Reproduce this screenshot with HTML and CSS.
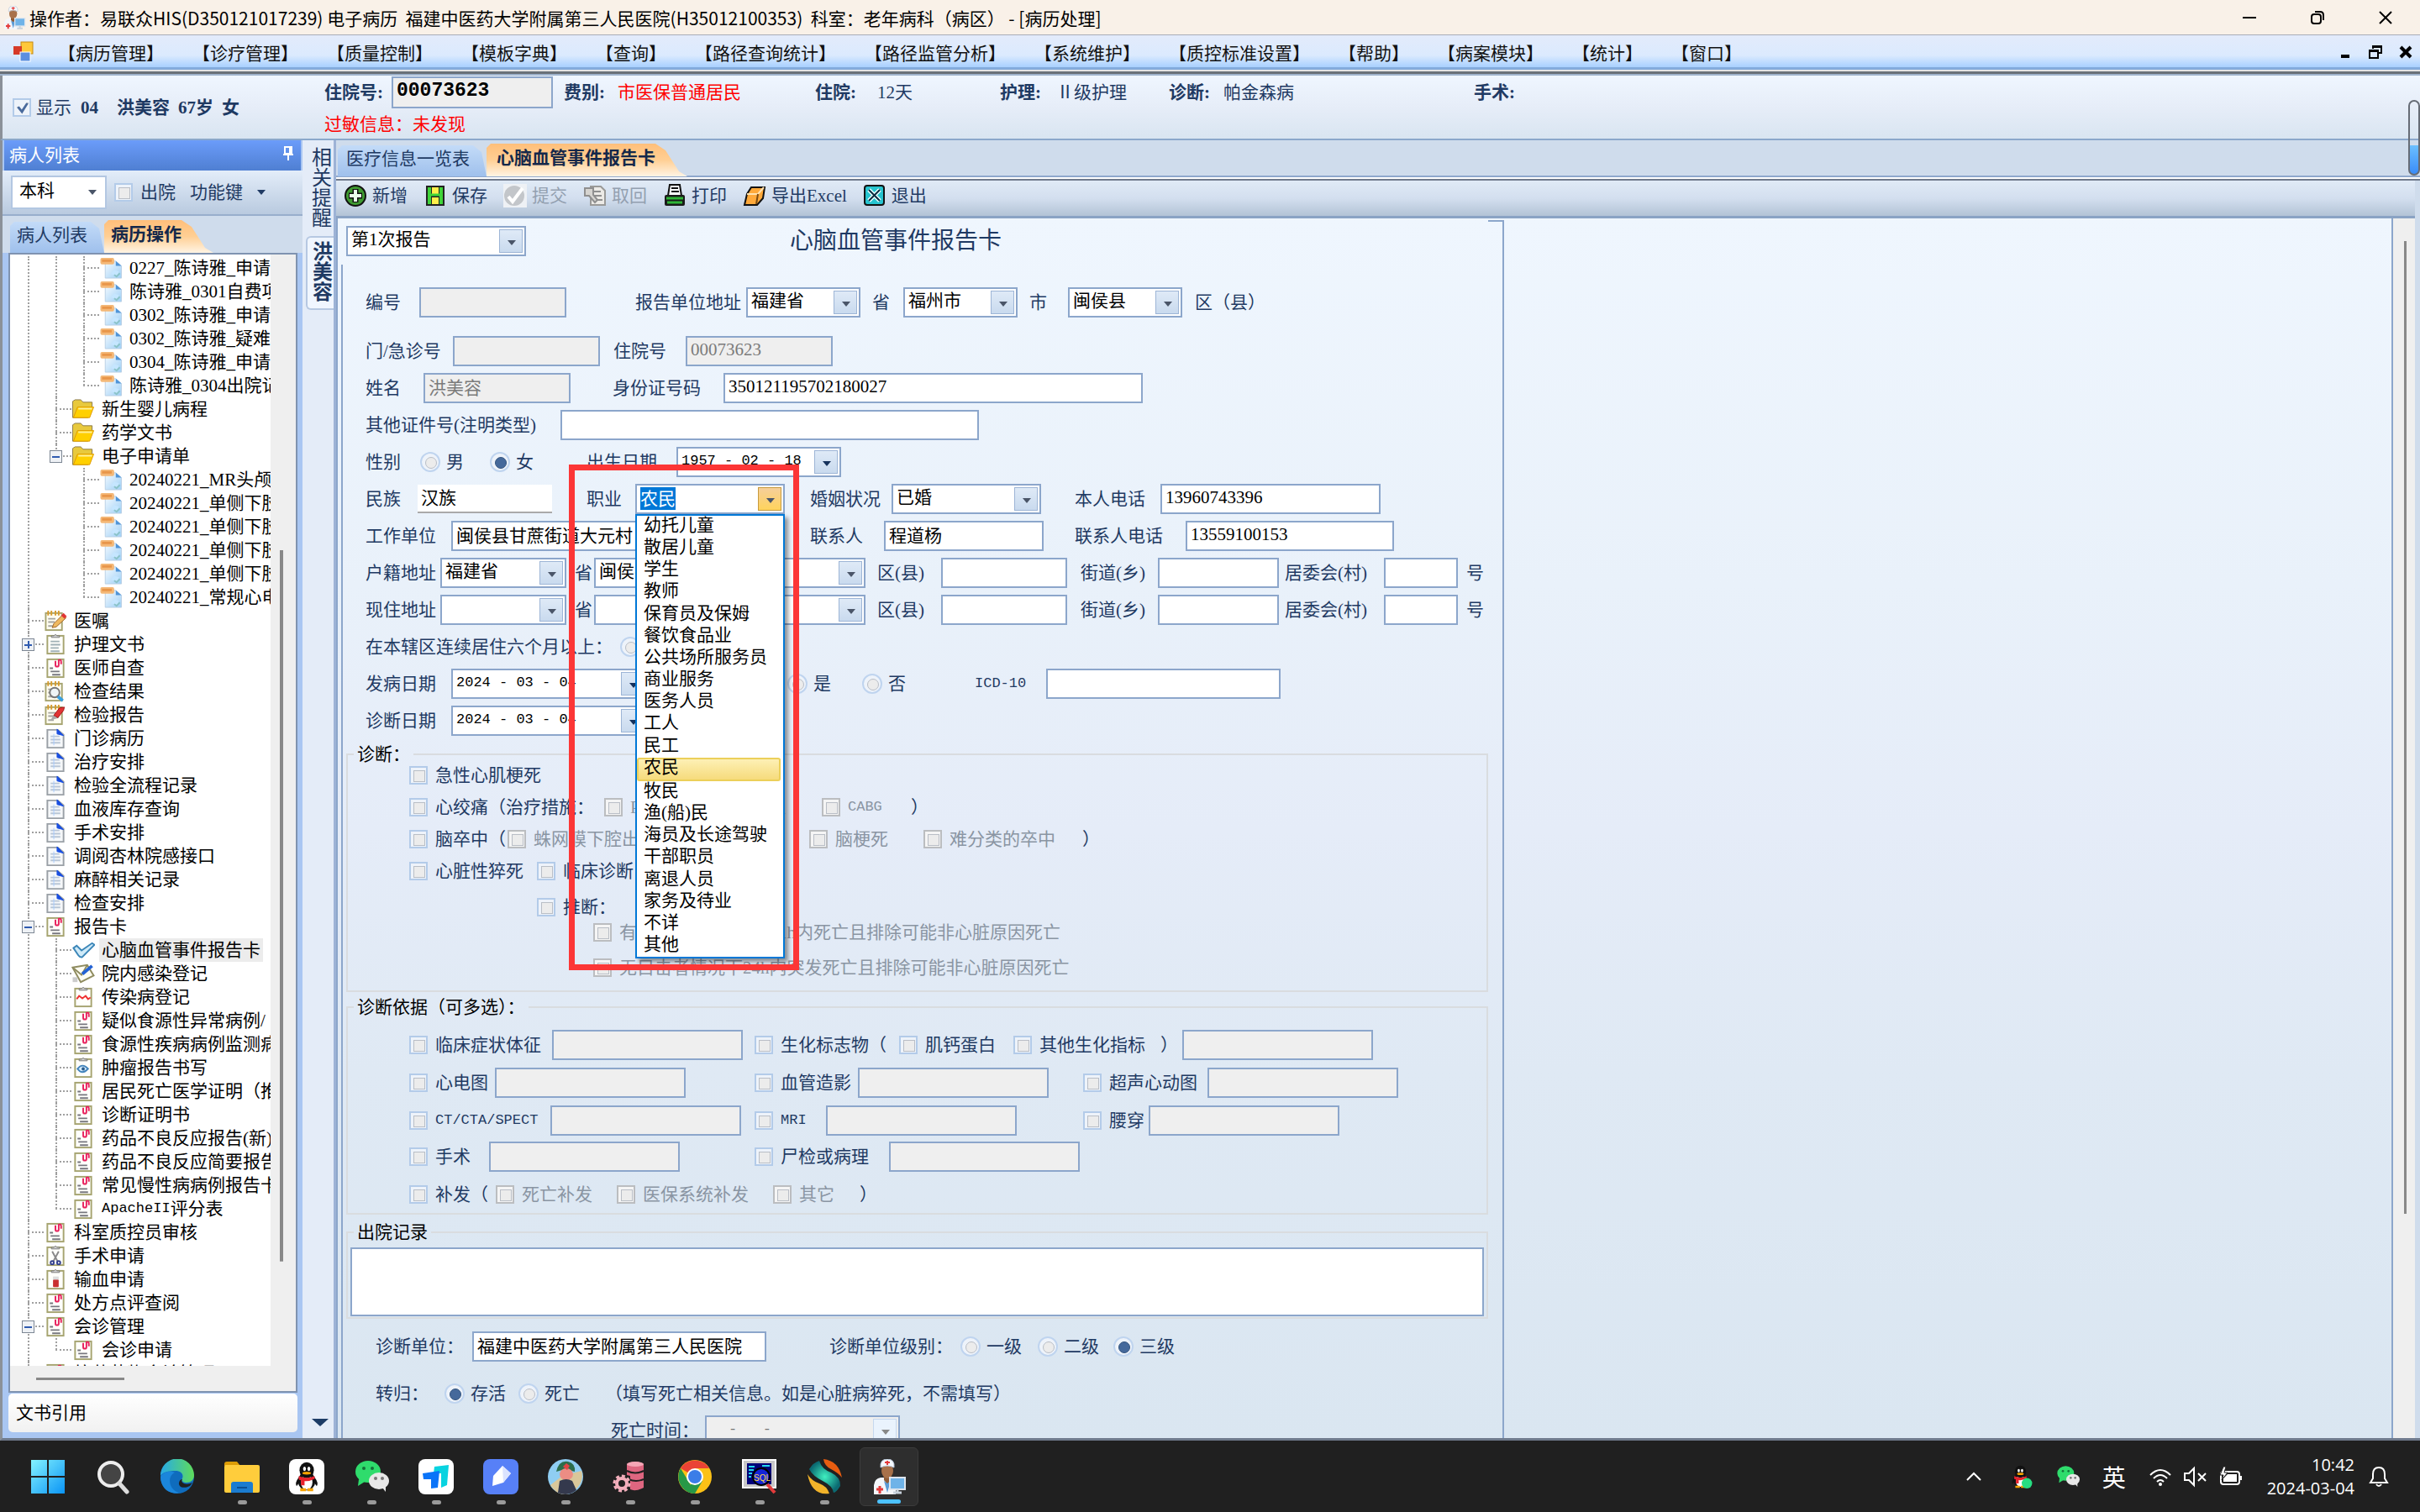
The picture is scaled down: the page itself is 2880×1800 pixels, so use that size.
FILE: index.html
```html
<!DOCTYPE html>
<html lang="zh-CN">
<head>
<meta charset="utf-8">
<title>电子病历 - 病历处理</title>
<link rel="stylesheet" href="styles.css">
</head>
<body>
<svg class="sprite" aria-hidden="true">
  <defs>
    <linearGradient id="g-win" x1="0" y1="0" x2="1" y2="1"><stop offset="0" stop-color="#84f3ff"/><stop offset="1" stop-color="#0a94f5"/></linearGradient>
    <linearGradient id="g-edge" x1="0" y1="0" x2="1" y2="0"><stop offset="0" stop-color="#27a9e8"/><stop offset="1" stop-color="#5fdc5a"/></linearGradient>
    <linearGradient id="g-page" x1="0" y1="0" x2="1" y2="1"><stop offset="0" stop-color="#f4faff"/><stop offset="1" stop-color="#9fd0f6"/></linearGradient>
    <radialGradient id="g-teal"><stop offset="0" stop-color="#3ff0c0"/><stop offset="1" stop-color="#0b6a72"/></radialGradient>
    <symbol id="i-doc" viewBox="0 0 28 28"><path d="M7 5h13l7 6v15H7z" fill="url(#g-page)" stroke="#b9cfe4"/><path d="M20 5l7 6h-7z" fill="#4f94d8"/><rect x="1" y="1" width="17" height="8" rx="2" fill="#f4b877"/><rect x="3" y="3" width="12" height="3" fill="#e8964a"/><path d="M14 21l4-5 6 2-2 5z" fill="#c5e6ff"/><path d="M18 22l3 2 4-4" fill="none" stroke="#8bc3c9" stroke-width="2"/></symbol>
    <symbol id="i-folder" viewBox="0 0 28 28"><path d="M1 4l3-2h7l3 3h11v6L20 24H1z" fill="#e8c93d" stroke="#8a7a4a"/><path d="M7 11h20l-5 13H2z" fill="#ffd000" stroke="#e09a00"/><path d="M8 13h17" stroke="#ffef9a" stroke-width="2"/></symbol>
    <symbol id="i-page" viewBox="0 0 28 28"><rect x="4" y="3" width="20" height="22" fill="#fffffb" stroke="#a6a470" stroke-width="2"/></symbol>
    <symbol id="i-clip" viewBox="0 0 28 28"><use href="#i-page"/><path d="M14 5v5q0 2 2 2t2-2V4q3-1 3 2v3" fill="none" stroke="#e8205c" stroke-width="2"/><path d="M7 14h4M8 18h11M10 22h10" stroke="#77777f" stroke-width="2"/></symbol>
    <symbol id="i-board" viewBox="0 0 28 28"><use href="#i-page"/><path d="M9 5h10V3h-3q-2-3-4 0H9z" fill="#d5d5d5" stroke="#777"/></symbol>
    <symbol id="i-list" viewBox="0 0 28 28"><use href="#i-board"/><path d="M8 10h11M8 14h12M8 18h10M8 22h11" stroke="#9fb0b5" stroke-width="2"/></symbol>
    <symbol id="i-note" viewBox="0 0 28 28"><rect x="2" y="4" width="20" height="21" fill="#fffdf0" stroke="#a6a470" stroke-width="2"/><path d="M5 1v6M9 1v6M14 1v6M18 1v6" stroke="#d79b2c" stroke-width="2"/><path d="M5 11h9M5 15h8M5 20h7" stroke="#a5a5a0" stroke-width="2"/></symbol>
    <symbol id="i-pencil" viewBox="0 0 28 28"><use href="#i-note"/><path d="M10 22l2-5L23 6l4 4-12 11z" fill="#efb95e" stroke="#9c6328"/><path d="M21 7l3-3 4 4-3 3z" fill="#e03535"/></symbol>
    <symbol id="i-find" viewBox="0 0 28 28"><use href="#i-note"/><circle cx="13" cy="15" r="6" fill="#eef4f6" stroke="#777" stroke-width="2"/><path d="M17 20l6 5" stroke="#38a0e0" stroke-width="4"/></symbol>
    <symbol id="i-pin" viewBox="0 0 28 28"><use href="#i-note"/><path d="M8 20l3-5 8 2z" fill="#aaa"/><path d="M12 14l7-9 6-1-1 4-7 9z" fill="#e23434" stroke="#a01717"/></symbol>
    <symbol id="i-blue" viewBox="0 0 28 28"><path d="M4 3h13l7 6v16H4z" fill="#f6f8fa" stroke="#9aa0a6" stroke-width="2"/><path d="M16 2l8 8-8-2z" fill="#1a4fe0" stroke="#1a4fe0"/><path d="M8 11h11M8 15h12M8 19h12" stroke="#b9c6d6" stroke-width="2"/><path d="M12 8v14" stroke="#a8ccff"/></symbol>
    <symbol id="i-check" viewBox="0 0 28 28"><path d="M2 11l4-3 6 6L25 5l3 2-15 15q-3 1-5-2z" fill="#cfeaf8" stroke="#3b86b8" stroke-width="2"/></symbol>
    <symbol id="i-pen" viewBox="0 0 28 28"><path d="M1 6l18-3 8 13-16 8z" fill="#fffdf2" stroke="#8f8c60" stroke-width="2"/><path d="M1 6l11 9 7-12" fill="none" stroke="#8f8c60" stroke-width="2"/><path d="M13 14L25 4" stroke="#2463d4" stroke-width="4"/><path d="M1 18h6v6H1z" fill="#ccc"/></symbol>
    <symbol id="i-wave" viewBox="0 0 28 28"><use href="#i-board"/><path d="M6 16l3-4 4 3 4-3 3 4 3-2" fill="none" stroke="#ef3030" stroke-width="2"/></symbol>
    <symbol id="i-eye" viewBox="0 0 28 28"><use href="#i-board"/><path d="M7 15q6-8 13 0q-7 8-13 0z" fill="#d4ecff" stroke="#4283bb" stroke-width="2"/><circle cx="14" cy="15" r="2" fill="#2b5b8a"/></symbol>
    <symbol id="i-cut" viewBox="0 0 28 28"><use href="#i-board"/><path d="M10 8l7 13M18 8l-7 13" stroke="#888" stroke-width="2"/><circle cx="10" cy="22" r="2" fill="none" stroke="#33408e" stroke-width="2"/><circle cx="18" cy="22" r="2" fill="none" stroke="#33408e" stroke-width="2"/></symbol>
    <symbol id="i-blood" viewBox="0 0 28 28"><use href="#i-board"/><rect x="11" y="10" width="7" height="5" fill="#ddd"/><rect x="11" y="14" width="7" height="9" rx="1" fill="#c92f2f"/></symbol>
    <symbol id="i-doctor" viewBox="0 0 40 42"><path d="M2 42V31q1-8 8-9h12q5 2 6 8v12z" fill="#f3f6fa"/><path d="M14 20h8v5l-4 5-4-5z" fill="#8e5c38"/><ellipse cx="18" cy="14" rx="7" ry="9" fill="#a8714a"/><path d="M10 10q-1-10 8-10t8 10q-8-4-16 0z" fill="#f5f8fc" stroke="#b8c6d8"/><path d="M18 2v5M15 4h6" stroke="#e33b3b" stroke-width="2"/><path d="M14 26l4 14 4-14-4 3z" fill="#5b9bd5"/><path d="M9 32v9M5 36h8" stroke="#e33b3b" stroke-width="3"/><rect x="21" y="22" width="18" height="14" fill="#6fb3e8" stroke="#dde5ee" stroke-width="2"/><path d="M25 40h10M30 36v4" stroke="#c8d2dc" stroke-width="3"/></symbol>
    <symbol id="i-wechat" viewBox="0 0 42 42"><ellipse cx="17" cy="15" rx="15" ry="13" fill="#2fdc6c"/><path d="M6 24l-1 8 8-5z" fill="#2fdc6c"/><circle cx="12" cy="11" r="2" fill="#14733a"/><circle cx="22" cy="11" r="2" fill="#14733a"/><ellipse cx="30" cy="26" rx="12" ry="10" fill="#e8e8e8"/><path d="M34 34l4 5v-8z" fill="#e8e8e8"/><circle cx="26" cy="23" r="2" fill="#777"/><circle cx="34" cy="23" r="2" fill="#777"/></symbol>
    <symbol id="i-qq" viewBox="0 0 34 42"><path d="M6 22q-6 8-3 12l4-5zM28 22q6 8 3 12l-4-5z" fill="#111"/><ellipse cx="17" cy="27" rx="12" ry="13" fill="#111"/><ellipse cx="17" cy="29" rx="8" ry="10" fill="#fff"/><ellipse cx="17" cy="12" rx="10" ry="11" fill="#111"/><ellipse cx="14" cy="10" rx="2" ry="3" fill="#fff"/><ellipse cx="20" cy="10" rx="2" ry="3" fill="#fff"/><ellipse cx="17" cy="16" rx="6" ry="2" fill="#f5a300"/><path d="M6 20q11 5 22 0v4q-8 4-14 3v6H9v-7l-3-1z" fill="#e8222c"/><path d="M8 39h8M18 39h8" stroke="#f5a300" stroke-width="4"/></symbol>
  </defs>
</svg>

<header class="titlebar">
  <svg class="title-icon"><use href="#i-doctor"/></svg>
  <h1>操作者：易联众HIS(D350121017239) 电子病历&nbsp; 福建中医药大学附属第三人民医院(H35012100353)&nbsp; 科室：老年病科（病区） - [病历处理]</h1>
  <div class="winctl">
    <button type="button" aria-label="最小化"><svg viewBox="0 0 18 18"><path d="M1 9h16" stroke="#000" stroke-width="2"/></svg></button>
    <button type="button" aria-label="还原"><svg viewBox="0 0 18 18"><rect x="2" y="5" width="11" height="11" rx="3" fill="none" stroke="#000" stroke-width="2"/><path d="M6 2h6q4 0 4 4v6" fill="none" stroke="#000" stroke-width="2"/></svg></button>
    <button type="button" aria-label="关闭"><svg viewBox="0 0 18 18"><path d="M2 2l14 14M16 2L2 16" stroke="#000" stroke-width="2"/></svg></button>
  </div>
</header>

<nav class="menubar">
  <svg class="mdi-icon" viewBox="0 0 26 26"><rect x="10" y="1" width="14" height="14" fill="#ffc83a" stroke="#c58a12"/><rect x="1" y="6" width="10" height="10" fill="#d63a28"/><rect x="9" y="13" width="12" height="11" fill="#5b8fe0" stroke="#fff"/></svg>
  <a href="#">【病历管理】</a><a href="#">【诊疗管理】</a><a href="#">【质量控制】</a><a href="#">【模板字典】</a><a href="#">【查询】</a><a href="#">【路径查询统计】</a><a href="#">【路径监管分析】</a><a href="#">【系统维护】</a><a href="#">【质控标准设置】</a><a href="#">【帮助】</a><a href="#">【病案模块】</a><a href="#">【统计】</a><a href="#">【窗口】</a>
  <div class="mdictl">
    <button type="button" aria-label="最小化子窗口"><svg viewBox="0 0 18 18"><path d="M4 14h10" stroke="#000" stroke-width="4"/></svg></button>
    <button type="button" aria-label="还原子窗口"><svg viewBox="0 0 18 18"><path d="M6 5V2h10v8h-3M6 3h10" fill="none" stroke="#000" stroke-width="2"/><path d="M2 7h10v9H2zM2 8h10" fill="none" stroke="#000" stroke-width="2"/></svg></button>
    <button type="button" aria-label="关闭子窗口"><svg viewBox="0 0 18 18"><path d="M3 3l12 12M15 3L3 15" stroke="#000" stroke-width="4"/></svg></button>
  </div>
</nav>

<section class="patient">
  <label class="show"><input type="checkbox" checked>显示</label>
  <p class="who"><b>04</b><b>洪美容</b><b>67岁</b><b>女</b></p>
  <div class="facts">
    <div class="fact-row">
      <label for="zyh"><b>住院号:</b></label><input id="zyh" class="big" value="00073623" readonly>
      <span><b>费别:</b></span><span class="red">市医保普通居民</span>
      <span><b>住院:</b></span><span>12天</span>
      <span><b>护理:</b></span><span>Ⅱ级护理</span>
      <span><b>诊断:</b></span><span>帕金森病</span>
      <span><b>手术:</b></span>
    </div>
    <p class="red allergy">过敏信息：未发现</p>
  </div>
  <div class="edge-handle"></div>
</section>

<main class="work">
  <aside class="side">
    <h2 class="side-head">病人列表<svg viewBox="0 0 14 20"><path d="M3 2h8v8H3zM9 2v8M1 11h12M7 11v7" fill="none" stroke="#fff" stroke-width="2"/></svg></h2>
    <div class="side-tools">
      <span class="combo flat"><select aria-label="科室"><option>本科</option></select></span>
      <label class="out"><input type="checkbox">出院</label>
      <button type="button" class="fn">功能键<i></i></button>
    </div>
    <div class="tabs side-tabs" role="tablist"><button type="button" role="tab" class="tab">病人列表</button><button type="button" role="tab" class="tab on">病历操作</button></div>
    <div class="treebox">
      <div class="treeview">
      <ul class="tree">
        <li><ul>
          <li><ul>
            <li><a href="#"><svg><use href="#i-doc"/></svg>0227_陈诗雅_申请单</a></li>
            <li><a href="#"><svg><use href="#i-doc"/></svg>陈诗雅_0301自费项目</a></li>
            <li><a href="#"><svg><use href="#i-doc"/></svg>0302_陈诗雅_申请单</a></li>
            <li><a href="#"><svg><use href="#i-doc"/></svg>0302_陈诗雅_疑难病例</a></li>
            <li><a href="#"><svg><use href="#i-doc"/></svg>0304_陈诗雅_申请单</a></li>
            <li><a href="#"><svg><use href="#i-doc"/></svg>陈诗雅_0304出院记录</a></li>
          </ul></li>
          <li><a href="#"><svg><use href="#i-folder"/></svg>新生婴儿病程</a></li>
          <li><a href="#"><svg><use href="#i-folder"/></svg>药学文书</a></li>
          <li><button type="button" class="exp" aria-label="折叠"></button><a href="#"><svg><use href="#i-folder"/></svg>电子申请单</a><ul>
            <li><a href="#"><svg><use href="#i-doc"/></svg>20240221_MR头颅平扫</a></li>
            <li><a href="#"><svg><use href="#i-doc"/></svg>20240221_单侧下肢</a></li>
            <li><a href="#"><svg><use href="#i-doc"/></svg>20240221_单侧下肢</a></li>
            <li><a href="#"><svg><use href="#i-doc"/></svg>20240221_单侧下肢</a></li>
            <li><a href="#"><svg><use href="#i-doc"/></svg>20240221_单侧下肢</a></li>
            <li><a href="#"><svg><use href="#i-doc"/></svg>20240221_常规心电图</a></li>
          </ul></li>
        </ul></li>
        <li><a href="#"><svg><use href="#i-pencil"/></svg>医嘱</a></li>
        <li><button type="button" class="exp plus" aria-label="展开"></button><a href="#"><svg><use href="#i-list"/></svg>护理文书</a></li>
        <li><a href="#"><svg><use href="#i-clip"/></svg>医师自查</a></li>
        <li><a href="#"><svg><use href="#i-find"/></svg>检查结果</a></li>
        <li><a href="#"><svg><use href="#i-pin"/></svg>检验报告</a></li>
        <li><a href="#"><svg><use href="#i-blue"/></svg>门诊病历</a></li>
        <li><a href="#"><svg><use href="#i-blue"/></svg>治疗安排</a></li>
        <li><a href="#"><svg><use href="#i-blue"/></svg>检验全流程记录</a></li>
        <li><a href="#"><svg><use href="#i-blue"/></svg>血液库存查询</a></li>
        <li><a href="#"><svg><use href="#i-blue"/></svg>手术安排</a></li>
        <li><a href="#"><svg><use href="#i-blue"/></svg>调阅杏林院感接口</a></li>
        <li><a href="#"><svg><use href="#i-blue"/></svg>麻醉相关记录</a></li>
        <li><a href="#"><svg><use href="#i-blue"/></svg>检查安排</a></li>
        <li><button type="button" class="exp" aria-label="折叠"></button><a href="#"><svg><use href="#i-clip"/></svg>报告卡</a><ul>
          <li><a href="#" class="cur"><svg><use href="#i-check"/></svg><span>心脑血管事件报告卡</span></a></li>
          <li><a href="#"><svg><use href="#i-pen"/></svg>院内感染登记</a></li>
          <li><a href="#"><svg><use href="#i-wave"/></svg>传染病登记</a></li>
          <li><a href="#"><svg><use href="#i-clip"/></svg>疑似食源性异常病例/</a></li>
          <li><a href="#"><svg><use href="#i-clip"/></svg>食源性疾病病例监测病</a></li>
          <li><a href="#"><svg><use href="#i-eye"/></svg>肿瘤报告书写</a></li>
          <li><a href="#"><svg><use href="#i-clip"/></svg>居民死亡医学证明（推</a></li>
          <li><a href="#"><svg><use href="#i-clip"/></svg>诊断证明书</a></li>
          <li><a href="#"><svg><use href="#i-clip"/></svg>药品不良反应报告(新)</a></li>
          <li><a href="#"><svg><use href="#i-clip"/></svg>药品不良反应简要报告</a></li>
          <li><a href="#"><svg><use href="#i-clip"/></svg>常见慢性病病例报告卡</a></li>
          <li><a href="#"><svg><use href="#i-clip"/></svg><span class="lat">ApacheII</span>评分表</a></li>
        </ul></li>
        <li><a href="#"><svg><use href="#i-clip"/></svg>科室质控员审核</a></li>
        <li><a href="#"><svg><use href="#i-cut"/></svg>手术申请</a></li>
        <li><a href="#"><svg><use href="#i-blood"/></svg>输血申请</a></li>
        <li><a href="#"><svg><use href="#i-clip"/></svg>处方点评查阅</a></li>
        <li><button type="button" class="exp" aria-label="折叠"></button><a href="#"><svg><use href="#i-clip"/></svg>会诊管理</a><ul>
          <li><a href="#"><svg><use href="#i-clip"/></svg>会诊申请</a></li>
        </ul></li>
        <li><a href="#"><svg><use href="#i-clip"/></svg>抗菌药物会诊管理</a></li>
        <li><a href="#"><svg><use href="#i-clip"/></svg>病历借阅</a></li>
      </ul>
      </div>
      <div class="vbar"></div>
      <div class="hbar"></div>
    </div>
    <button type="button" class="side-foot">文书引用</button>
  </aside>

  <div class="vtabs">
    <button type="button" class="vtab">相关提醒</button>
    <button type="button" class="vtab on">洪美容</button>
    <button type="button" class="vmore" aria-label="更多"></button>
  </div>

  <section class="doc">
    <div class="tabs doc-tabs" role="tablist"><button type="button" role="tab" class="tab">医疗信息一览表</button><button type="button" role="tab" class="tab on">心脑血管事件报告卡</button></div>
    <div class="toolbar">
      <button type="button"><svg viewBox="0 0 28 28"><circle cx="14" cy="14" r="12" fill="#3f9a32" stroke="#111" stroke-width="2"/><path d="M14 6v16M6 14h16" stroke="#111" stroke-width="7"/><path d="M14 7v14M7 14h14" stroke="#eaffea" stroke-width="4"/></svg>新增</button>
      <button type="button"><svg viewBox="0 0 28 28"><path d="M3 2h22v24H3z" fill="#222"/><path d="M5 4h4v20H5zM19 4h4v20h-4z" fill="#3fd43a"/><path d="M10 4h8v8h-8zM10 16h8v8h-8z" fill="#ffef4a"/><path d="M5 13h18" stroke="#3fd43a" stroke-width="3"/></svg>保存</button>
      <button type="button" disabled><svg viewBox="0 0 28 28"><rect width="28" height="28" fill="#eef1f5"/><circle cx="13" cy="14" r="12" fill="#c3c6ca"/><path d="M6 15l5 6L23 5" fill="none" stroke="#fff" stroke-width="4"/></svg>提交</button>
      <button type="button" disabled><svg viewBox="0 0 28 28"><path d="M9 3h12l5 5v17H9z" fill="#eceae6" stroke="#9a9a98" stroke-width="2"/><path d="M13 9h8M13 14h9M15 19h8" stroke="#8f8f8f" stroke-width="2"/><path d="M2 5h10v8l5 6-3 3-7-8H2z" fill="#d6d4d0" stroke="#8f8f8f" stroke-width="2"/></svg>取回</button>
      <button type="button"><svg viewBox="0 0 28 28"><path d="M8 1h12l2 13H6z" fill="#fff" stroke="#111" stroke-width="2"/><path d="M10 5h8M10 9h9" stroke="#111" stroke-width="2"/><rect x="2" y="13" width="24" height="13" rx="2" fill="#1a1a1a"/><path d="M4 17h20M5 22h18" stroke="#2fb536" stroke-width="3"/></svg>打印</button>
      <button type="button"><svg viewBox="0 0 28 28"><path d="M10 4h16l-2 13-7 8H2l3-13z" fill="#ffa93a" stroke="#111" stroke-width="2"/><path d="M5 12h13l7-8" fill="none" stroke="#ffe2b0" stroke-width="2"/><path d="M18 12l-2 12" stroke="#7a4a10" stroke-width="2"/></svg>导出Excel</button>
      <button type="button"><svg viewBox="0 0 28 28"><rect x="2" y="2" width="23" height="23" rx="3" fill="#27c4cf" stroke="#111" stroke-width="2"/><path d="M7 7l13 13M20 7L7 20" stroke="#e9ffff" stroke-width="5"/><path d="M7 7l13 13M20 7L7 20" stroke="#0b2c40" stroke-width="2"/></svg>退出</button>
    </div>
    <div class="canvas">
      <form class="sheet">
        <div class="sheet-head">
          <span class="combo"><select aria-label="报告次数"><option>第1次报告</option></select></span>
          <h2>心脑血管事件报告卡</h2>
        </div>
        <div class="sheet-body">
          <div class="fields">
            <div class="row r-unit">
              <label for="bh">编号</label><input id="bh" class="w175" readonly>
              <label for="p1">报告单位地址</label><span class="combo"><select id="p1"><option>福建省</option></select></span>
              <label for="p2">省</label><span class="combo"><select id="p2"><option>福州市</option></select></span>
              <label for="p3">市</label><span class="combo"><select id="p3"><option>闽侯县</option></select></span><span>区（县）</span>
            </div>
            <div class="row r-out">
              <label for="mz">门/急诊号</label><input id="mz" class="w175" readonly>
              <label for="zy">住院号</label><input id="zy" class="w175" value="00073623" readonly>
            </div>
            <div class="row r-name">
              <label for="xm">姓名</label><input id="xm" class="w175" value="洪美容" readonly>
              <label for="sfz">身份证号码</label><input id="sfz" value="350121195702180027">
            </div>
            <div class="row r-other"><label for="qt">其他证件号(注明类型)</label><input id="qt"></div>
            <div class="row r-sex">
              <span>性别</span><label class="opt"><input type="radio" name="sex">男</label><label class="opt"><input type="radio" name="sex" checked>女</label>
              <label for="csrq">出生日期</label><span class="combo date"><input id="csrq" value="1957 - 02 - 18"></span>
            </div>
            <div class="row r-job">
              <label for="mzu">民族</label><input id="mzu" class="plain" value="汉族">
              <label for="zhiye">职业</label>
              <span class="combo open"><input id="zhiye" class="picked" value="农民">
                <ul class="menu" role="listbox"><li role="option">幼托儿童</li><li role="option">散居儿童</li><li role="option">学生</li><li role="option">教师</li><li role="option">保育员及保姆</li><li role="option">餐饮食品业</li><li role="option">公共场所服务员</li><li role="option">商业服务</li><li role="option">医务人员</li><li role="option">工人</li><li role="option">民工</li><li role="option" aria-selected="true">农民</li><li role="option">牧民</li><li role="option">渔(船)民</li><li role="option">海员及长途驾驶</li><li role="option">干部职员</li><li role="option">离退人员</li><li role="option">家务及待业</li><li role="option">不详</li><li role="option">其他</li></ul>
                <span class="redbox"></span>
              </span>
              <label for="hy">婚姻状况</label><span class="combo w178"><select id="hy"><option>已婚</option></select></span>
              <label for="dh">本人电话</label><input id="dh" value="13960743396">
            </div>
            <div class="row r-work">
              <label for="gz">工作单位</label><input id="gz" class="w390" value="闽侯县甘蔗街道大元村">
              <label for="lxr">联系人</label><input id="lxr" class="w190" value="程道杨">
              <label for="lxdh">联系人电话</label><input id="lxdh" value="13559100153">
            </div>
            <div class="row r-addr">
              <label for="h1">户籍地址</label><span class="combo w150"><select id="h1"><option>福建省</option></select></span>
              <label for="h2">省</label><span class="combo w150"><select id="h2"><option>闽侯县</option></select></span>
              <span></span><span class="combo w150"><select id="h3" aria-label="户籍县区"><option></option></select></span>
              <label for="h4">区(县)</label><input id="h4" class="w150"><label for="h5">街道(乡)</label><input id="h5" class="w144"><label for="h6">居委会(村)</label><input id="h6" class="w88"><span>号</span>
            </div>
            <div class="row r-addr">
              <label for="x1">现住地址</label><span class="combo w150"><select id="x1"><option></option></select></span>
              <label for="x2">省</label><span class="combo w150"><select id="x2"><option></option></select></span>
              <span></span><span class="combo w150"><select id="x3" aria-label="现住县区"><option></option></select></span>
              <label for="x4">区(县)</label><input id="x4" class="w150"><label for="x5">街道(乡)</label><input id="x5" class="w144"><label for="x6">居委会(村)</label><input id="x6" class="w88"><span>号</span>
            </div>
            <div class="row r-live"><span>在本辖区连续居住六个月以上：</span><input type="radio" name="live" aria-label="居住六个月以上"></div>
            <div class="row r-ill">
              <label for="fb">发病日期</label><span class="combo date"><input id="fb" value="2024 - 03 - 04"></span>
              <label class="opt"><input type="radio" name="first">是</label><label class="opt"><input type="radio" name="first">否</label>
              <label for="icd" class="lat">ICD-10</label><input id="icd">
            </div>
            <div class="row r-ill"><label for="zd">诊断日期</label><span class="combo date"><input id="zd" value="2024 - 03 - 04"></span></div>
          </div>

          <fieldset class="dx">
            <legend>诊断：</legend>
            <div class="line"><label class="opt"><input type="checkbox">急性心肌梗死</label></div>
            <div class="line l-angina"><label class="opt"><input type="checkbox">心绞痛（治疗措施：</label><label class="opt"><input type="checkbox" disabled>PCI 冠脉内支架植入</label><label class="opt"><input type="checkbox" disabled><span class="lat">CABG</span></label><span>）</span></div>
            <div class="line l-stroke"><label class="opt"><input type="checkbox">脑卒中（</label><label class="opt"><input type="checkbox" disabled>蛛网膜下腔出血</label><label class="opt"><input type="checkbox" disabled>脑梗死</label><label class="opt"><input type="checkbox" disabled>难分类的卒中</label><span>）</span></div>
            <div class="line l-sudden"><label class="opt"><input type="checkbox">心脏性猝死</label><label class="opt"><input type="checkbox">临床诊断</label></div>
            <div class="line in1"><label class="opt"><input type="checkbox">推断：</label></div>
            <div class="line in2"><label class="opt"><input type="checkbox" disabled>有目击者情况下发病1h内死亡且排除可能非心脏原因死亡</label></div>
            <div class="line in2"><label class="opt"><input type="checkbox" disabled>无目击者情况下24h内突发死亡且排除可能非心脏原因死亡</label></div>
          </fieldset>

          <fieldset class="basis">
            <legend>诊断依据（可多选）：</legend>
            <div class="row b1"><label class="opt"><input type="checkbox">临床症状体征</label><input class="w227" aria-label="临床症状体征说明" readonly><label class="opt"><input type="checkbox">生化标志物（</label><label class="opt"><input type="checkbox">肌钙蛋白</label><label class="opt"><input type="checkbox">其他生化指标</label><span>）</span><input class="w227" aria-label="其他生化指标说明" readonly></div>
            <div class="row b2"><label class="opt"><input type="checkbox">心电图</label><input class="w227" aria-label="心电图说明" readonly><label class="opt"><input type="checkbox">血管造影</label><input class="w227" aria-label="血管造影说明" readonly><label class="opt"><input type="checkbox">超声心动图</label><input class="w227" aria-label="超声心动图说明" readonly></div>
            <div class="row b3"><label class="opt"><input type="checkbox"><span class="lat">CT/CTA/SPECT</span></label><input class="w227" aria-label="CT说明" readonly><label class="opt"><input type="checkbox"><span class="lat">MRI</span></label><input class="w227" aria-label="MRI说明" readonly><label class="opt"><input type="checkbox">腰穿</label><input class="w227" aria-label="腰穿说明" readonly></div>
            <div class="row b4"><label class="opt"><input type="checkbox">手术</label><input class="w227" aria-label="手术说明" readonly><label class="opt"><input type="checkbox">尸检或病理</label><input class="w227" aria-label="尸检或病理说明" readonly></div>
            <div class="row b5"><label class="opt"><input type="checkbox">补发（</label><label class="opt"><input type="checkbox" disabled>死亡补发</label><label class="opt"><input type="checkbox" disabled>医保系统补发</label><label class="opt"><input type="checkbox" disabled>其它</label><span>）</span></div>
          </fieldset>

          <fieldset class="record">
            <legend>出院记录</legend>
            <textarea aria-label="出院记录"></textarea>
          </fieldset>

          <div class="tail">
            <div class="row t1"><label for="dw">诊断单位：</label><input id="dw" class="w350" value="福建中医药大学附属第三人民医院"><span>诊断单位级别：</span><label class="opt"><input type="radio" name="lv">一级</label><label class="opt"><input type="radio" name="lv">二级</label><label class="opt"><input type="radio" name="lv" checked>三级</label></div>
            <div class="row t2"><span>转归：</span><label class="opt"><input type="radio" name="end" checked>存活</label><label class="opt"><input type="radio" name="end">死亡</label><span>（填写死亡相关信息。如是心脏病猝死，不需填写）</span></div>
            <div class="row t3"><label for="sw">死亡时间：</label><span class="combo date off"><input id="sw" value="-   -" disabled></span></div>
          </div>
        </div>
      </form>
      <div class="scroll"></div>
    </div>
  </section>
</main>

<footer class="taskbar">
  <div class="apps">
    <button type="button" aria-label="开始"><svg viewBox="0 0 42 42"><path d="M1 1h19v19H1zM22 1h19v19H22zM1 22h19v19H1zM22 22h19v19H22z" fill="url(#g-win)"/></svg></button>
    <button type="button" aria-label="搜索"><svg viewBox="0 0 42 42"><circle cx="19" cy="18" r="14" fill="#444" stroke="#eee" stroke-width="4"/><path d="M29 29l9 10" stroke="#ddd" stroke-width="5" stroke-linecap="round"/></svg></button>
    <button type="button" aria-label="Edge"><svg viewBox="0 0 42 42"><circle cx="21" cy="21" r="20" fill="#0f6cbd"/><path d="M1 20A20 20 0 0 1 41 19c0 6-4 9-9 9-4 0-7-2-5-5 2-5-2-9-8-9-9 0-16 2-18 6z" fill="url(#g-edge)"/><path d="M18 16c-9 4-8 20 5 24-14 3-22-8-22-19 3-5 10-8 17-5z" fill="#1b86dc"/><path d="M27 24c-3 4 4 8 12 4l-3 4c-8 4-14 1-13-4 1-3 2-4 4-4z" fill="#202020"/></svg></button>
    <button type="button" class="run" aria-label="文件资源管理器"><svg viewBox="0 0 42 42"><path d="M0 6q0-3 3-3h12l4 5h-19z" fill="#dc9c06"/><rect y="7" width="42" height="33" rx="2" fill="#ffcd3c"/><path d="M8 40V30q0-3 3-3h20q3 0 3 3v10z" fill="#1b7cd0"/><path d="M15 34h12" stroke="#0b4f94" stroke-width="2"/></svg></button>
    <button type="button" class="run" aria-label="QQ"><svg viewBox="0 0 42 42"><rect width="42" height="42" rx="8" fill="#fff"/><use href="#i-qq" x="6" y="3" width="30" height="36"/></svg></button>
    <button type="button" class="run" aria-label="微信"><svg viewBox="0 0 42 42"><use href="#i-wechat"/></svg></button>
    <button type="button" class="run" aria-label="协作"><svg viewBox="0 0 42 42"><rect width="42" height="42" rx="8" fill="#fff"/><path d="M19 9l17-2-2 24-7 3V17h-9z" fill="#08d3e0"/><path d="M5 17l20-3-2 20-8 1V24H6z" fill="#0a74f8"/></svg></button>
    <button type="button" class="run" aria-label="笔记"><svg viewBox="0 0 42 42"><rect width="42" height="42" rx="8" fill="#5780f7"/><path d="M23 8l10 9-9 11-13 4 1-12z" fill="#fff"/><path d="M23 8l10 9-9 11z" fill="#dbe3ff"/></svg></button>
    <button type="button" class="run" aria-label="头像应用"><svg viewBox="0 0 42 42"><circle cx="21" cy="21" r="21" fill="#8fcdf2"/><path d="M3 31l14-11 23-6q3 10-4 19-8 9-17 9-10-1-16-11z" fill="#d9c79a"/><path d="M10 15q3-14 14-12 9 2 8 12-12-4-22 0z" fill="#2c6e4c"/><ellipse cx="22" cy="18" rx="8" ry="7" fill="#ec8d84"/><path d="M12 40l2-14q8-4 15 0l5 11q-10 8-22 3z" fill="#34394d"/><path d="M18 9l4-4 4 3-3 5z" fill="#e04444"/></svg></button>
    <button type="button" class="run" aria-label="数据库"><svg viewBox="0 0 42 42"><path d="M17 6q10-6 20 0v28q-10 5-16 2V20l-4-1z" fill="#de6680"/><ellipse cx="27" cy="6" rx="10" ry="3" fill="#f5a6b6"/><path d="M17 14q10 5 20 0M19 24q9 4 18 0" fill="none" stroke="#202020" stroke-width="2"/><circle cx="11" cy="29" r="6" fill="none" stroke="#f2aebb" stroke-width="4"/><circle cx="11" cy="29" r="9" fill="none" stroke="#f2aebb" stroke-width="3" stroke-dasharray="4 3"/></svg></button>
    <button type="button" class="run" aria-label="Chrome"><svg viewBox="0 0 42 42"><circle cx="21" cy="21" r="20" fill="#fbc116"/><path d="M21 21L4 11a20 20 0 0 1 34 0H21z" fill="#ea4335"/><path d="M4 11l12 20 5 10A20 20 0 0 1 4 11z" fill="#279847"/><path d="M16 30l14-4-9 15-5-1z" fill="#279847"/><circle cx="21" cy="21" r="10" fill="#fff"/><circle cx="21" cy="21" r="8" fill="#3b7de8"/></svg></button>
    <button type="button" class="run" aria-label="SQL"><svg viewBox="0 0 42 42"><rect x="1" y="1" width="39" height="33" fill="#c8c8c8" stroke="#fff" stroke-width="2"/><rect x="6" y="5" width="29" height="25" fill="#000078"/><path d="M8 9h7M8 13h6M8 17h4M8 21h3M24 8h9" stroke="#21d7ee" stroke-width="2"/><path d="M30 30l9 10" stroke="#e23b3b" stroke-width="4"/><circle cx="23" cy="21" r="10" fill="#1424d8" stroke="#000" stroke-width="2"/><text x="14" y="26" font-family="Liberation Sans" font-size="10" fill="#ffd84a">SQL</text></svg></button>
    <button type="button" class="run" aria-label="球形应用"><svg viewBox="0 0 42 42"><path d="M20 0Q38 2 42 22q-5-6-13-10T20 0z" fill="#e85d10"/><path d="M15 2q3 10 14 14 12 6 11 16-5 8-8 8-1-8-13-14T3 12q5-8 12-10z" fill="url(#g-teal)"/><path d="M1 18q5 8 14 11t12 12Q6 44 1 18z" fill="#f2b32a"/></svg></button>
    <button type="button" class="run active" aria-label="电子病历"><svg viewBox="0 0 40 42"><use href="#i-doctor"/></svg></button>
  </div>
  <div class="tray">
    <svg class="t-up" viewBox="0 0 20 20"><path d="M2 14l8-8 8 8" fill="none" stroke="#fff" stroke-width="2"/></svg>
    <svg class="t-ic" viewBox="0 0 34 36"><use href="#i-qq" width="30" height="36"/><circle cx="25" cy="28" r="8" fill="#26de81"/></svg>
    <svg class="t-ic" viewBox="0 0 42 42"><use href="#i-wechat"/></svg>
    <span class="ime">英</span>
    <svg class="t-ic" viewBox="0 0 28 28"><path d="M2 12Q14 0 26 12M6 16q8-8 16 0M10 20q4-4 8 0" fill="none" stroke="#fff" stroke-width="2"/><circle cx="14" cy="23" r="2" fill="#fff"/></svg>
    <svg class="t-ic vol" viewBox="0 0 28 28"><path d="M1 10h5l6-6v20l-6-6H1z" fill="none" stroke="#fff" stroke-width="2"/><path d="M17 10l9 9M26 10l-9 9" stroke="#fff" stroke-width="2"/></svg>
    <svg class="t-ic bat" viewBox="0 0 28 28"><rect x="2" y="8" width="22" height="15" rx="3" fill="none" stroke="#fff" stroke-width="2"/><path d="M10 11h11v9H5v-4z" fill="#fff"/><path d="M25 13h2v5h-2z" fill="#fff"/><path d="M5 2L1 12h4l-2 6 7-9H6l2-7z" fill="#fff" stroke="#202020"/></svg>
    <p class="clock"><span>10:42</span><span>2024-03-04</span></p>
    <svg class="t-ic" viewBox="0 0 28 28"><path d="M4 21l3-5v-5q0-8 7-8t7 8v5l3 5zM11 23q3 4 6 0" fill="none" stroke="#fff" stroke-width="2"/></svg>
  </div>
</footer>
</body>
</html>
```
FILE: styles.css
```css
:root {
  --ink: #1f3a63;
  --line: #8ca6cb;
  --song: "Liberation Serif", "Noto Sans CJK SC", sans-serif;
  --hei: "Noto Sans CJK SC", sans-serif;
  --mono: "Liberation Mono", "Noto Sans CJK SC", monospace;
}
* { box-sizing: border-box; }
body {
  margin: 0;
  height: 100vh;
  display: flex;
  flex-direction: column;
  overflow: hidden;
  font: 21px/28px var(--song);
  color: var(--ink);
  background: #cfdcec;
}
button, input, select, textarea { font: inherit; color: inherit; margin: 0; border-radius: 0; }
button { background: none; border: 0; padding: 0; white-space: nowrap; }
a { color: inherit; text-decoration: none; }
p, h1, h2, ul { margin: 0; padding: 0; font-size: inherit; font-weight: inherit; list-style: none; }
.sprite { position: absolute; width: 0; height: 0; }
.lat { font-family: var(--mono); font-size: 17px; }

/* title bar and menu */
.titlebar {
  height: 42px; flex: none; display: flex; align-items: center;
  background: #f9f1e8; border-bottom: 1px solid #a9adb8;
  font-family: var(--hei); color: #000;
}
.title-icon { width: 28px; height: 28px; margin: 0 4px 0 3px; }
.titlebar h1 { flex: 1; white-space: nowrap; }
.winctl { display: flex; gap: 63px; padding-right: 32px; }
.winctl svg, .mdictl svg { display: block; width: 18px; height: 18px; }
.menubar {
  height: 48px; flex: none; display: flex; align-items: center; gap: 34px;
  padding-bottom: 9px; font-family: var(--hei); color: #111;
  background: linear-gradient(#e3ebfb, #dbeafe 50%, #a8d0ff 38px, #83abdc 38px, #83abdc 41px, #e4e4e4 41px, #e4e4e4 43px, #697078 43px, #697078 46px, #9fb3cc 46px);
}
.menubar a { white-space: nowrap; }
.mdi-icon { width: 26px; height: 26px; margin: 0 -6px 0 15px; }
.mdictl { margin-left: auto; display: flex; gap: 18px; padding-right: 8px; }

/* patient strip */
.patient {
  height: 77px; flex: none; display: flex; position: relative; padding-left: 12px;
  background: linear-gradient(#eff6ff, #e6edf8 50%, #d9e5f1); border-bottom: 2px solid #8ba8cb; border-left: 3px solid #8b9199;
}
.show { display: flex; align-items: center; gap: 6px; }
.who { display: flex; align-items: center; margin-left: 11px; width: 290px; }
.who b { margin-right: 10px; white-space: nowrap; }
.who b:first-child { margin-right: 22px; }
.fact-row { display: grid; grid-template-columns: 80px 205px 64px 235px 74px 146px 67px 134px 65px 298px auto; align-items: center; height: 40px; white-space: nowrap; }
.big { width: 192px; height: 38px; background: #efefef; font: bold 23px/28px "Liberation Mono", monospace; color: #000; }
.red { color: #f00; }
.allergy { margin-top: 4px; }
.edge-handle { position: absolute; right: 0; top: 29px; width: 14px; height: 90px; border: 2px solid #666c76; border-radius: 7px; background: linear-gradient(transparent 60%, #6cc0ff 60%, #3a8cf8); z-index: 3; }

/* form controls */
input, select, textarea { border: 2px solid var(--line); background: #fff; color: #000; height: 36px; padding: 0 4px 4px; min-width: 0; outline: 0; }
input[readonly] { background: #efefef; color: #7b7b7b; }
input.big[readonly] { color: #000; }
input[type=checkbox], input[type=radio] {
  appearance: none; flex: none; width: 22px; height: 22px; padding: 3px;
  border: 2px solid #b3cbe9; background: #eef3fa;
}
input[type=checkbox]::before, input[type=radio]::before {
  content: ""; display: block; width: 12px; height: 12px; background: #ececec; border: 1px solid #b9bec6;
}
input[type=radio], input[type=radio]::before { border-radius: 50%; }
input[type=radio] { width: 24px; height: 24px; padding: 4px; border-color: #bfd4ef; }
input[type=radio]:checked::before { background: #45699b; border-color: #34557f; }
input[type=checkbox]:checked::before { background: #4a6a9c; clip-path: polygon(0 45%, 20% 35%, 42% 65%, 85% 0, 100% 10%, 45% 100%); }
input:disabled { border-color: #bbbdc0; background: #f5f5f5; }
.opt { display: flex; align-items: center; gap: 9px; white-space: nowrap; line-height: 24px; }
.opt:has(input[type=radio]) { gap: 7px; }
.opt:has(:disabled) { color: #8a95a3; }

.combo { position: relative; display: block; width: 136px; height: 36px; }
.combo select, .combo > input { appearance: none; width: 100%; display: block; }
.combo::before {
  content: ""; position: absolute; right: 4px; top: 4px; bottom: 4px; width: 26px;
  border: 1px solid #9db5d6; background: linear-gradient(#dfeaf7, #c9daee); pointer-events: none;
}
.combo::after {
  content: ""; position: absolute; right: 12px; top: 17px; border: 5px solid transparent;
  border-top: 6px solid #4a5568; border-bottom: 0; pointer-events: none;
}
.combo.date::after { border-top-color: #16325c; }
.combo.date > input { font-family: var(--mono); font-size: 17px; }
.combo.flat { width: 114px; height: 40px; }
.combo.flat select { height: 40px; border-color: #b3c7e2; padding-left: 8px; }
.combo.flat::before { display: none; }
.w88 { width: 88px; } .w144 { width: 144px; } .w150, .combo.w150 { width: 150px; } .w175 { width: 175px; }
.combo.w178 { width: 178px; } .w190 { width: 190px; } .w227 { width: 227px; } .w350 { width: 350px; } .w390 { width: 390px; }

/* work area */
.work { flex: 1; min-height: 0; display: flex; border-left: 3px solid #8b9199; border-bottom: 3px solid #6f7a8c; }
.side { width: 357px; flex: none; display: flex; flex-direction: column; padding: 0 6px 7px 7px; background: #a9c6f2; }
.side-head { height: 36px; margin: 0 -4px 0 -5px; padding: 0 8px 4px 6px; display: flex; align-items: center; justify-content: space-between; color: #fff; font-family: var(--hei); background: linear-gradient(#6b9cfa, #4f7fd2); }
.side-head svg { width: 14px; height: 20px; }
.side-tools { height: 54px; display: flex; align-items: center; margin: 0 -6px 0 -7px; padding-left: 10px; background: linear-gradient(#e3edf9, #b9cadf); border-bottom: 2px solid #98aecc; }
.out { display: flex; align-items: center; gap: 9px; margin-left: 9px; }
.fn { margin-left: 17px; display: flex; align-items: center; gap: 17px; }
.fn i { border: 5px solid transparent; border-top: 6px solid var(--ink); border-bottom: 0; }
.tabs { display: flex; align-items: flex-end; background: #cfdcec; }
.tab { height: 37px; padding: 0 20px 5px 10px; background: linear-gradient(#c3dbf8, #9fc0ec); text-align: left; clip-path: polygon(0 5px, 5px 0, calc(100% - 16px) 0, calc(100% - 6px) 8px, 100% 100%, 0 100%); }
.tab.on { height: 39px; padding: 0 38px 6px 12px; font-weight: bold; color: #14284a; background: linear-gradient(#ffbf7a, #ffcf94 50%, #fff4e4); clip-path: polygon(0 5px, 5px 0, calc(100% - 38px) 0, calc(100% - 26px) 8px, calc(100% - 10px) calc(100% - 6px), 100% 100%, 0 100%); }
.side-tabs { height: 44px; margin: 0 -6px 0 -7px; padding-left: 9px; }
.side-tabs .tab { padding-left: 8px; }
.treebox { flex: 1; min-height: 0; display: grid; grid-template: 1fr 30px / 1fr 30px; border: 2px solid #7f93b0; background: #efefef; font-family: var(--song); color: #000; }
.treeview { background: #fff; overflow: hidden; padding: 2px 0 0 21px; }
.tree li { position: relative; white-space: nowrap; }
.tree li::before { content: ""; position: absolute; left: 0; top: 0; bottom: 0; border-left: 2px dotted #a0a0a0; }
.tree ul > li:last-child::before { bottom: auto; height: 14px; }
.tree ul { padding-left: 33px; }
.tree a { display: flex; align-items: center; height: 28px; }
.tree a::before { content: ""; flex: none; width: 19px; border-top: 2px dotted #a0a0a0; }
.tree svg { width: 28px; height: 27px; flex: none; margin-right: 8px; }
.cur span { background: #ececec; margin: 0 -3px; padding: 0 3px; }
.exp { position: absolute; left: -7px; top: 7px; width: 15px; height: 15px; border: 1px solid #7d8794; background: linear-gradient(#2f5bb0, #2f5bb0) center/9px 2px no-repeat, #eef1f5; z-index: 1; }
.exp.plus { background: linear-gradient(#2f5bb0, #2f5bb0) center/9px 2px no-repeat, linear-gradient(#2f5bb0, #2f5bb0) center/2px 9px no-repeat, #eef1f5; }
.vbar { background: linear-gradient(#888, #888) 11px 74%/4px 64% no-repeat; }
.hbar { background: linear-gradient(#888, #888) 31px 14px/105px 3px no-repeat; }
.side-foot { height: 46px; margin-top: 1px; padding-left: 9px; text-align: left; background: linear-gradient(#fff, #f1f1f1); border-radius: 5px; color: #000; }

.vtabs { width: 40px; flex: none; display: flex; flex-direction: column; align-items: stretch; padding-left: 4px; background: #e4ecf8; border-right: 3px solid #9db3d6; }
.vtab { writing-mode: vertical-rl; text-orientation: upright; line-height: 30px; padding: 8px 0; height: 114px; font-size: 24px; text-align: left; }
.vtab.on { font-weight: bold; height: 88px; padding: 4px 0; border: 2px solid #b6c8e2; border-right: 0; border-radius: 6px 0 0 6px; background: #f0f6ff; }
.vmore { margin: auto auto 14px; border: 10px solid transparent; border-top: 9px solid #1c3c66; border-bottom: 0; }

.doc { flex: 1; min-width: 0; display: flex; flex-direction: column; padding-right: 6px; }
.doc-tabs { height: 48px; flex: none; padding: 0 0 5px 2px; background: linear-gradient(#cfdcec 42px, #8ea7cc 42px, #8ea7cc 44px, #fff 44px, #fff 46px, #6f7a8c 46px); margin-right: -6px; }
.toolbar { height: 45px; flex: none; display: flex; align-items: center; gap: 19px; padding: 0 0 6px 9px; border-bottom: 3px solid #8aa3c4; background: linear-gradient(#e0eaf6, #d3dfef 50%, #b3c3d6); }
.toolbar button { display: flex; align-items: center; gap: 6px; }
.toolbar svg { width: 28px; height: 28px; }
.toolbar button:disabled { color: #93a0b0; }

.canvas { flex: 1; min-height: 0; overflow: hidden; display: flex; border-left: 2px solid var(--line); background: linear-gradient(#eff6fe, #e9f1fa 30%, #e5ecf8 50%, #dfe9f4 70%, #dae6f1); }
.scroll { margin-left: auto; width: 28px; flex: none; border-left: 2px solid var(--line); background: linear-gradient(#888, #888) 13px 27px/3px 1158px no-repeat, #efefef; }
.sheet { flex: none; margin-left: 4px; }
.sheet-head { height: 53px; display: flex; align-items: flex-start; padding: 7px 0 0 6px; border-right: 2px solid var(--line); margin-top: 2px; background: linear-gradient(var(--line), var(--line)) right top/17px 2px no-repeat; }
.sheet-head .combo { width: 214px; }
.sheet-head h2 { font-size: 28px; line-height: 36px; margin-left: 314px; }
.sheet-body { border: solid var(--line); border-width: 0 2px; }
.fields { padding: 20px 22px 0 27px; display: grid; grid-template-rows: 65px repeat(11, 44px); align-items: start; }
.row, .line { display: grid; align-items: center; height: 36px; white-space: nowrap; }
.r-unit { grid-template-columns: 64px 257px 132px 150px 37px 150px 46px 151px auto; margin-top: 7px; }
.r-out { grid-template-columns: 104px 191px 86px 175px; }
.r-name { grid-template-columns: 69px 225px 132px 499px; }
.r-other { grid-template-columns: 232px 498px; }
.r-sex { grid-template-columns: 65px 83px 115px 107px 196px; }
.r-job { grid-template-columns: 62px 201px 58px 208px 97px 218px 102px 262px; }
.r-work { grid-template-columns: 102px 427px 88px 227px 132px 248px; }
.r-addr { grid-template-columns: 89px 160px 23px 150px 23px 164px 76px 166px 92px 151px 118px 98px auto; }
.r-live { grid-template-columns: 303px 90px; }
.r-ill { grid-template-columns: 102px 400px 89px 134px 85px 279px; }
.r-sex .combo { width: 196px; }
.r-ill .combo { width: 234px; }
.plain { width: 160px; border: 0; border-bottom: 2px solid #aaa; height: 34px; }
.open { width: 178px; }
.open::before { background: linear-gradient(#f6cf9a, #ffd35c); border-color: #c79a3d; }
.open > input { background: linear-gradient(#0078d7, #0078d7) 4px 2px/42px 27px no-repeat, #fff; color: #fff; }
.menu { position: absolute; left: 0; top: 36px; width: 178px; height: 529px; display: flex; flex-direction: column; background: #fff; border: 2px solid #0078d7; box-shadow: 4px 4px 5px #0006; color: #000; z-index: 2; }
.menu li { flex: 1; padding-left: 7px; line-height: 20px; border: 1px solid transparent; }
.menu [aria-selected] { background: linear-gradient(#fdf0b5, #f6db7c); border: 2px solid #ecd05a; border-radius: 3px; margin-right: 3px; padding-left: 6px; line-height: 18px; }
.redbox { position: absolute; left: -79px; top: -23px; width: 274px; height: 602px; border: 7px solid #fc3636; z-index: 3; pointer-events: none; }

fieldset { margin: 0 17px 0 4px; border: 2px solid #d9dcdf; padding: 0 0 0 73px; min-width: 0; }
legend { margin-left: -66px; padding: 0 4px; line-height: 20px; color: #000; }
.dx { margin-top: 4px; height: 293px; }
.line { height: 30px; margin-bottom: 8px; justify-content: start; }
.l-angina { grid-template-columns: 232px 259px 106px auto; }
.l-stroke { grid-template-columns: 117px 359px 136px 189px auto; }
.l-sudden { grid-template-columns: 152px auto; margin-bottom: 13px; }
.in1 { padding-left: 152px; margin-bottom: 0; }
.in2 { padding-left: 219px; margin-bottom: 12px; }
.basis { margin-top: 8px; height: 257px; }
.basis legend { margin-bottom: 17px; }
.basis .row { margin-bottom: 9px; }
.basis .b3 { margin-bottom: 7px; }
.b1 { grid-template-columns: 170px 241px 172px 136px 175px 26px 227px; }
.b2 { grid-template-columns: 102px 309px 123px 268px 148px 227px; }
.b3 { grid-template-columns: 168px 243px 85px 306px 78px 227px; }
.b4 { grid-template-columns: 95px 316px 160px 227px; }
.b5 { grid-template-columns: 103px 144px 186px 103px auto; }
.record { margin-top: 11px; padding: 8px 3px 1px; }
.record legend { margin-left: 4px; }
textarea { display: block; width: 100%; height: 82px; resize: none; }
.tail { padding: 15px 0 0 39px; }
.tail .row { justify-content: start; }
.t1 { grid-template-columns: 115px 425px 156px 92px 90px auto; }
.tail .t2 { grid-template-columns: 82px 88px 103px auto; margin: 20px 0 8px; }
.tail .t3 { grid-template-columns: 112px 232px; padding-left: 280px; }
.t3 .combo { width: 232px; }
.off input { background: #efefef; border-color: var(--line); color: #777; padding-left: 26px; }
.off::before { background: #eaf3fd; border-color: #c6d8ee; }
.combo.off::after { border-top-color: #888; }

/* taskbar */
.taskbar { height: 85px; flex: none; display: flex; align-items: center; justify-content: space-between; background: #202020; color: #fff; font-family: var(--hei); }
.apps { display: flex; gap: 7px; padding-left: 22px; }
.apps button { position: relative; width: 70px; height: 70px; display: grid; place-items: center; border-radius: 6px; }
.apps svg { width: 42px; height: 42px; }
.run::after { content: ""; position: absolute; bottom: 2px; left: 30px; width: 11px; height: 5px; border-radius: 3px; background: #9a9a9a; }
.active { background: #2e2e2e; border: 1px solid #3c3c3c; }
.active::after { left: 20px; width: 28px; background: #4cc2ff; }
.tray { display: flex; align-items: center; gap: 27px; padding-right: 35px; }
.t-up { width: 20px; height: 20px; margin-right: 6px; }
.t-ic { width: 28px; height: 28px; }
.vol, .bat { margin-left: -13px; }
.ime { font-size: 28px; line-height: 36px; }
.clock { display: flex; flex-direction: column; align-items: flex-end; font-family: "Open Sans", sans-serif; font-size: 20px; margin: 0 -12px 0 2px; }
```
